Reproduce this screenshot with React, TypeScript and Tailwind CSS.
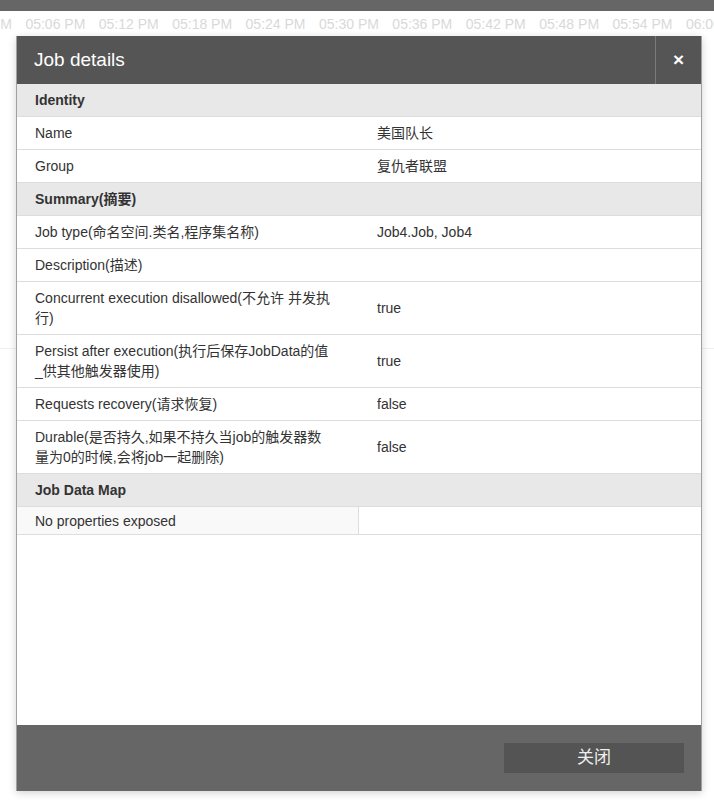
import React from "react";

const FONT = "font-['Liberation_Sans','Noto_Sans_CJK_SC',sans-serif]";

const TICKS = ["05:00 PM", "05:06 PM", "05:12 PM", "05:18 PM", "05:24 PM", "05:30 PM", "05:36 PM", "05:42 PM", "05:48 PM", "05:54 PM", "06:00 PM"];

type Row =
  | { kind: "section"; title: string }
  | { kind: "pair"; label: string; value: string };

const ROWS: Row[] = [
  { kind: "section", title: "Identity" },
  { kind: "pair", label: "Name", value: "美国队长" },
  { kind: "pair", label: "Group", value: "复仇者联盟" },
  { kind: "section", title: "Summary(摘要)" },
  { kind: "pair", label: "Job type(命名空间.类名,程序集名称)", value: "Job4.Job, Job4" },
  { kind: "pair", label: "Description(描述)", value: "" },
  { kind: "pair", label: "Concurrent execution disallowed(不允许 并发执行)", value: "true" },
  { kind: "pair", label: "Persist after execution(执行后保存JobData的值_供其他触发器使用)", value: "true" },
  { kind: "pair", label: "Requests recovery(请求恢复)", value: "false" },
  { kind: "pair", label: "Durable(是否持久,如果不持久当job的触发器数量为0的时候,会将job一起删除)", value: "false" },
  { kind: "section", title: "Job Data Map" },
];

export default function App() {
  return (
    <div className={`relative w-[714px] h-[802px] overflow-hidden bg-white ${FONT}`}>
      {/* ── page behind the dialog ── */}
      <div className="h-[11px] bg-[#666]" />
      <div className="flex h-[25px] items-center -ml-[48px] pt-[2px] text-[14px] text-[#d9d9d9]">
        {TICKS.map((t, i) => (
          <span key={i} className="w-[73.4px] shrink-0 whitespace-nowrap">
            {t}
          </span>
        ))}
      </div>
      <div className="mt-[312px] h-px bg-[#f0f0f0]" />

      {/* ── dialog ── */}
      <div className="absolute left-[16px] top-[36px] w-[686px] h-[755px] flex flex-col border-x border-[#a0a0a0] shadow-[0_2px_8px_rgba(0,0,0,0.18)]">
        <div className="h-[48px] shrink-0 flex bg-[#555]">
          <div className="flex-1 flex items-center pl-[17px] text-[19px] text-white">Job details</div>
          <div className="w-[46px] border-l border-[#7a7a7a] flex items-center justify-center text-white text-[19px] font-bold">
            ×
          </div>
        </div>

        <div className="flex-1 bg-white text-[14px] text-[#333] leading-[20px]">
          {ROWS.map((r, i) =>
            r.kind === "section" ? (
              <div key={i} className="h-[33px] bg-[#e8e8e8] border-b border-[#ddd] pl-[18px] pt-[6px] font-bold">
                {r.title}
              </div>
            ) : (
              <div key={i} className="flex border-b border-[#ddd]">
                <div className="w-1/2 pl-[18px] pr-[25px] py-[6px]">{r.label}</div>
                <div className="w-1/2 pl-[18px] py-[6px] flex items-center">{r.value}</div>
              </div>
            )
          )}
          <div className="flex h-[28px] border-b border-[#ddd]">
            <div className="w-1/2 bg-[#f9f9f9] border-r border-[#ddd] pl-[18px] pt-[4px]">No properties exposed</div>
            <div className="w-1/2" />
          </div>
        </div>

        <div className="h-[66px] shrink-0 bg-[#666] flex items-center justify-end pr-[17px]">
          <button className="w-[180px] h-[30px] bg-[#545454] text-[#eee] text-[17px]">关闭</button>
        </div>
      </div>
    </div>
  );
}
